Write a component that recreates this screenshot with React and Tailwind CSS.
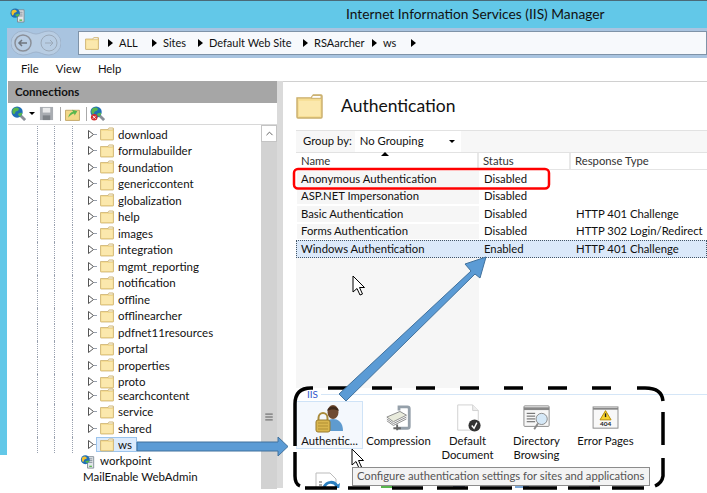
import { ChevronUp, Menu } from 'lucide-react';

const TREE = [
  'download', 'formulabuilder', 'foundation', 'genericcontent', 'globalization', 'help', 'images',
  'integration', 'mgmt_reporting', 'notification', 'offline', 'offlinearcher', 'pdfnet11resources',
  'portal', 'properties', 'proto', 'searchcontent', 'service', 'shared', 'ws',
];

const ROWS = [
  { name: 'Anonymous Authentication', status: 'Disabled', type: '' },
  { name: 'ASP.NET Impersonation', status: 'Disabled', type: '' },
  { name: 'Basic Authentication', status: 'Disabled', type: 'HTTP 401 Challenge' },
  { name: 'Forms Authentication', status: 'Disabled', type: 'HTTP 302 Login/Redirect' },
  { name: 'Windows Authentication', status: 'Enabled', type: 'HTTP 401 Challenge', selected: true },
];

function Folder({ className = 'w-[14px] h-[14px]' }) {
  return (
    <svg viewBox="0 0 28 26" className={`shrink-0 ${className}`}>
      <path d="M1 4h15l2-3h8a1 1 0 0 1 1 1v22a1 1 0 0 1-1 1H2a1 1 0 0 1-1-1z" fill="#f6dd92" stroke="#c9ae6c" strokeWidth="1.5" />
      <path d="M17 1.500h9v3H16z" fill="#fff" stroke="#c9ae6c" strokeWidth="1" />
      <path d="M3 7h22v16H3z" fill="#fbe8ad" />
    </svg>
  );
}

function Globe({ className = 'w-[15px] h-[15px]', bad }) {
  return (
    <svg viewBox="0 0 16 16" className={`shrink-0 ${className}`}>
      <path d="M9 9l6 6" stroke="#8a8f98" strokeWidth="3" />
      <circle cx="6.500" cy="6.500" r="6" fill="#1f6fb5" />
      <path d="M3 2.500c2-1.500 4-1 5 0s0 3-2 3-1 3-3 3-2-4.500 0-6zM8 8c2-1 4-1 4 0s-2 4-3 3-2-2-1-3z" fill="#58b74e" />
      {bad && <circle cx="4.500" cy="12" r="3.500" fill="#d32f2f" />}
      {bad && <path d="M3 10.500l3 3m0-3l-3 3" stroke="#fff" strokeWidth="1" />}
    </svg>
  );
}

function ServerGlobe({ className = 'w-[15px] h-[16px]' }) {
  return (
    <svg viewBox="0 0 16 17" className={`shrink-0 ${className}`}>
      <path d="M8 3h7v13H8z" fill="#e3e6e9" stroke="#7d8a94" />
      <path d="M9.500 5.500h4M9.500 7.500h4M9.500 9.500h4" stroke="#7d8a94" />
      <path d="M10 14h3" stroke="#58b74e" strokeWidth="1.500" />
      <circle cx="5.500" cy="6.500" r="5" fill="#1f6fb5" />
      <path d="M2 4c2-2 4-1 5 0s-1 2-2 2-1 3-2 3-2-3-1-5z" fill="#f2c230" />
      <path d="M6 8c2-1 4-1 4 0s-2 3-3 2-2-1-1-2z" fill="#58b74e" />
    </svg>
  );
}

function Crumb({ label, width }) {
  return (
    <div className={`flex items-center shrink-0 ${width}`}>
      <span className="shrink-0 w-0 h-0 border-y-[4px] border-y-transparent border-l-[5px] border-l-black" />
      {label && <span className="ml-[6px]">{label}</span>}
    </div>
  );
}

function TreeRow({ label, selected }) {
  return (
    <div className={`flex items-center h-[16.5px] ${label === 'proto' ? 'mb-[-3px]' : ''}`}>
      <span className="w-[37px] shrink-0" />
      <span className="w-[17px] h-full shrink-0 border-l border-dotted border-gray-400" />
      <span className="w-[18px] h-full shrink-0 border-l border-dotted border-gray-400" />
      <span className="w-[16px] h-full shrink-0 border-l border-dotted border-gray-400" />
      <svg viewBox="0 0 6 9" className="w-[6px] h-[9px] shrink-0">
        <path d="M.5.500l5 4-5 4z" fill="#fff" stroke="#555" />
      </svg>
      <span className="w-[2px] shrink-0 border-t border-dotted border-gray-400" />
      <div className={`flex items-center gap-[4px] h-[15px] pl-[3px] pr-[4px] border ${selected ? 'bg-[#dcebfc] border-[#9cc4ec]' : 'border-transparent'}`}>
        <Folder />
        <span className="text-[11.5px] text-[#111]">{label}</span>
      </div>
    </div>
  );
}

function ConnectionsPane() {
  return (
    <div className="w-[277px] flex flex-col shrink-0 -ml-[7px]">
      <div className="h-[22px] bg-[#a6a6a6] flex items-center pl-[7px] ml-[8px] text-[11.5px] font-bold text-[#111]">Connections</div>
      <div className="h-[22px] flex items-center pl-[3px] ml-[8px] gap-[3px] bg-white border-b border-[#d8d8d8]">
        <Globe />
        <span className="w-0 h-0 border-x-[3px] border-x-transparent border-t-[3px] border-t-black" />
        <svg viewBox="0 0 16 16" className="w-[15px] h-[15px] ml-[1px]">
          <path d="M1 1h14v14H1z" fill="#a9adb2" />
          <path d="M4 2h8v5H4z" fill="#e9eaeb" />
          <path d="M4 10h8v5H4z" fill="#7e8388" />
        </svg>
        <span className="w-px h-[14px] bg-[#aaa] ml-[3px]" />
        <svg viewBox="0 0 28 26" className="w-[15px] h-[14px] ml-[1px]">
          <path d="M1 6h26v19H1z" fill="#f3d98a" stroke="#b89a55" strokeWidth="1.500" />
          <path d="M6 20c1-7 5-10 9-11l-2-4 10 3-5 8-1-4c-4 1-8 4-11 8z" fill="#58b74e" />
        </svg>
        <span className="w-px h-[14px] bg-[#aaa] ml-[3px]" />
        <Globe bad />
      </div>
      <div className="flex h-[364px]">
        <div className="flex-1 min-w-0 pt-[1px]">
          {TREE.map((label) => (
            <TreeRow key={label} label={label} selected={label === 'ws'} />
          ))}
          <div className="flex items-center h-[16px] pl-[80px] gap-[5px]">
            <ServerGlobe className="w-[15px] h-[15px]" />
            <span className="text-[11.5px] text-[#111]">workpoint</span>
          </div>
          <div className="h-[16px] pl-[83px] text-[11.5px] text-[#111] leading-[16px]">MailEnable WebAdmin</div>
        </div>
        <div className="w-[16px] bg-[#d2d2d2] flex flex-col items-center shrink-0">
          <div className="h-[17px] w-full bg-white border border-[#c4c4c4] flex items-center justify-center">
            <ChevronUp className="w-[11px] h-[11px] text-[#555]" />
          </div>
          <div className="flex-1 flex items-start justify-center pt-[270px]">
            <Menu className="w-[10px] h-[10px] text-[#444]" />
          </div>
        </div>
      </div>
    </div>
  );
}

function FeatureTile({ label, children, active }) {
  return (
    <div className={`w-[67px] h-[48px] flex flex-col items-center border shrink-0 ${active ? 'bg-[#f4f8fd] border-[#cfe3f7]' : 'border-transparent'}`}>
      <div className="h-[32px] shrink-0 flex items-center justify-center">{children}</div>
      <span className="shrink-0 text-[11.3px] leading-[14px] text-center text-[#111] whitespace-pre-line">{label}</span>
    </div>
  );
}

function AuthPane() {
  return (
    <div className="flex-1 min-w-0 h-[407px] flex">
      <div className="w-[6px] shrink-0 bg-[#dadada]" />
      <div className="flex-1 min-w-0 border-t border-[#d0d0d0] flex flex-col pl-[13px] overflow-hidden">
        <div className="h-[48px] shrink-0 flex items-center">
          <Folder className="w-[27px] h-[25px]" />
          <span className="text-[17.5px] ml-[18px] text-[#111]">Authentication</span>
        </div>
        <div className="h-[23px] shrink-0 flex items-center bg-[#f7f7f7] border-y border-[#e2e2e2] pl-[7px] text-[11.3px]">
          <span className="text-[#111]">Group by:</span>
          <div className="ml-[3px] w-[106px] h-full bg-white flex items-center justify-between px-[5px]">
            <span className="text-[#111]">No Grouping</span>
            <span className="w-0 h-0 mr-[1px] border-x-[3px] border-x-transparent border-t-[3px] border-t-black" />
          </div>
        </div>
        <div className="flex shrink-0 h-[17px] border-b border-[#e4e4e4] text-[11.3px] text-[#333]">
          <div className="relative w-[183px] shrink-0 pl-[5px] border-r-2 border-[#e8e8e8]">
            Name
            <span className="absolute left-[85px] top-[-1px] w-0 h-0 border-x-[4px] border-x-transparent border-b-[4px] border-b-black" />
          </div>
          <div className="w-[92px] shrink-0 pl-[4px] border-r-2 border-[#e8e8e8]">Status</div>
          <div className="pl-[4px]">Response Type</div>
        </div>
        <div className="flex flex-col shrink-0 h-[218px]">
          {ROWS.map((row) => (
            <div
              key={row.name}
              className={`flex items-center h-[17.5px] shrink-0 text-[11.3px] text-[#111] border ${row.selected ? 'bg-[#dbe9fa] border-dotted border-[#456]' : 'border-transparent'}`}
            >
              <div className={`w-[182px] shrink-0 pl-[4px] pt-[1px] h-full flex items-center ${row.selected ? '' : 'bg-[#f6f6f6]'}`}>{row.name}</div>
              <div className="w-[92px] shrink-0 pl-[5px] pt-[1px]">{row.status}</div>
              <div className="pl-[5px] pt-[1px] whitespace-nowrap">{row.type}</div>
            </div>
          ))}
          <div className="w-[183px] flex-1 bg-[#f6f6f6]" />
        </div>
        <div className="flex shrink-0 items-center h-[12px] text-[10px] text-[#3355cc] pl-[11px] gap-[3px]">
          <span className="leading-none">IIS</span>
          <span className="flex-1 border-t border-[#d5e6f7]" />
        </div>
        <div className="flex shrink-0 gap-[2px] mt-[1px]">
          <FeatureTile label="Authentic..." active>
            <svg viewBox="0 0 30 30" className="w-[30px] h-[30px]">
              <path d="M10 28c0-9 3-12 8-12s10 3 10 12z" fill="#5f9bcf" />
              <ellipse cx="18" cy="9" rx="5.500" ry="7" fill="#6f4a30" />
              <path d="M12 8c1-6 11-6 12 0-3-2-9-2-12 0z" fill="#3f2a1c" />
              <path d="M3.500 18v-3a4.500 5 0 0 1 9 0v3" fill="none" stroke="#a98b3c" strokeWidth="2" />
              <rect x="1" y="17" width="14" height="12" rx="2" fill="#d9b64e" stroke="#9a7d2e" />
              <path d="M3 20h10M3 23h10M3 26h10" stroke="#b08f35" />
            </svg>
          </FeatureTile>
          <FeatureTile label="Compression">
            <svg viewBox="0 0 30 30" className="w-[28px] h-[28px]">
              <path d="M2 14l14-6 7 4-14 7z" fill="#e9ebdc" stroke="#888" />
              <path d="M2 16l7 5 14-7M2 18l7 5 14-7" fill="none" stroke="#888" />
              <path d="M15 7V3h9a2 2 0 0 1 2 2v19a2 2 0 0 1-2 2H13" fill="none" stroke="#95a0aa" strokeWidth="3" />
              <path d="M9 26h8M13 22v6" stroke="#666" strokeWidth="2" />
            </svg>
          </FeatureTile>
          <FeatureTile label={'Default\nDocument'}>
            <svg viewBox="0 0 30 30" className="w-[28px] h-[28px]">
              <path d="M4 1h16l6 6v21H4z" fill="#fff" stroke="#cfcfcf" />
              <path d="M20 1v6h6" fill="#eee" stroke="#cfcfcf" />
              <circle cx="22" cy="23" r="6.500" fill="#333" />
              <path d="M19 23l2.500 3 3-6" fill="none" stroke="#fff" strokeWidth="1.500" />
            </svg>
          </FeatureTile>
          <FeatureTile label={'Directory\nBrowsing'}>
            <svg viewBox="0 0 30 30" className="w-[28px] h-[28px]">
              <rect x="1" y="2" width="27" height="22" rx="1" fill="#f7f7f7" stroke="#888" />
              <path d="M1 5h27" stroke="#888" strokeWidth="3" />
              <path d="M4 10h9M4 13h9M4 16h9M4 19h9" stroke="#555" />
              <circle cx="20" cy="16" r="6" fill="#d5e8f7" stroke="#888" />
              <path d="M16 21l-4 6" stroke="#888" strokeWidth="2" />
            </svg>
          </FeatureTile>
          <FeatureTile label="Error Pages">
            <svg viewBox="0 0 30 26" className="w-[28px] h-[24px]">
              <rect x="1" y="1" width="27" height="23" fill="#f8f8f8" stroke="#888" />
              <path d="M1 3h27" stroke="#888" strokeWidth="2" />
              <path d="M14.500 5l6 10h-12z" fill="#f6d32d" stroke="#b58900" />
              <path d="M14.500 8v4" stroke="#222" strokeWidth="1.500" />
              <text x="14.500" y="22" textAnchor="middle" fontSize="7" fontWeight="700" fill="#222">404</text>
            </svg>
          </FeatureTile>
        </div>
        <div className="flex shrink-0 mt-[23px] pl-[17px]">
          <svg viewBox="0 0 28 28" className="w-[28px] h-[28px]">
            <path d="M3 1h14l6 6v21H3z" fill="#fff" stroke="#bbb" />
            <path d="M6 10h3M6 13h3M6 16h3" stroke="#555" />
            <path d="M11 15c3-6 10-6 13-1" fill="none" stroke="#2a7fc0" strokeWidth="3" />
            <path d="M27 11l-1 7-6-2z" fill="#2a7fc0" />
          </svg>
          <span className="ml-[40px] w-[12px] h-[28px] bg-[#58b74e]" />
          <span className="ml-[60px] w-[12px] h-[28px] bg-[#7d8fa8]" />
          <span className="ml-[50px] w-[14px] h-[28px] bg-[#7aa7d8]" />
          <span className="ml-[60px] w-[10px] h-[28px] bg-[#e0b6d8]" />
        </div>
      </div>
    </div>
  );
}

export default function App() {
  return (
    <div className="relative w-[707px] h-[493px] overflow-hidden bg-white font-['Lato',sans-serif]">
      <div className="h-[28px] bg-[#62c8e8] border-t border-[#4a6a78] flex items-center pl-[10px]">
        <ServerGlobe />
        <span className="ml-[321px] text-[13.75px] text-[#111]">Internet Information Services (IIS) Manager</span>
      </div>
      <div className="flex">
        <div className="w-[7px] h-[427px] bg-[#62c8e8] shrink-0" />
        <div className="flex-1 min-w-0">
          <div className="h-[30px] bg-[#a9c4e0] flex items-center pl-[4px]">
            <svg viewBox="0 0 50 26" className="w-[50px] h-[26px] shrink-0">
              <path d="M12 1c6 0 9 3 13 3s7-3 13-3a12 12 0 0 1 0 24c-6 0-9-3-13-3s-7 3-13 3a12 12 0 0 1 0-24z" fill="#b8cde3" stroke="#9fb4cc" />
              <circle cx="12" cy="13" r="8" fill="none" stroke="#8b9099" strokeWidth="1.500" />
              <path d="M16 13H8m3-3l-3 3 3 3" fill="none" stroke="#6f757e" strokeWidth="1.500" />
              <circle cx="38" cy="13" r="8" fill="none" stroke="#9ba9b8" />
              <path d="M34 13h8m-3-3l3 3-3 3" fill="none" stroke="#9ba9b8" />
            </svg>
            <div className="ml-[17px] flex-1 h-[24px] bg-[#f7f9fc] border border-[#7f93a8] flex items-center pl-[6px] text-[11px] text-[#111]">
              <Folder className="w-[14px] h-[13px] mr-[9px]" />
              <Crumb label="ALL" width="w-[44px]" />
              <Crumb label="Sites" width="w-[46px]" />
              <Crumb label="Default Web Site" width="w-[105px]" />
              <Crumb label="RSAarcher" width="w-[69px]" />
              <Crumb label="ws" width="w-[39px]" />
              <Crumb />
            </div>
          </div>
          <div className="h-[23px] bg-white flex items-center pl-[14px] gap-[17px] text-[11.3px] text-[#111]">
            <span>File</span>
            <span>View</span>
            <span>Help</span>
          </div>
          <div className="flex">
            <ConnectionsPane />
            <AuthPane />
          </div>
        </div>
      </div>

      {/* annotations drawn over the screenshot */}
      <svg viewBox="0 0 707 493" className="absolute inset-0 w-[707px] h-[493px] pointer-events-none">
        <rect x="294" y="169" width="255" height="19.500" rx="4" fill="none" stroke="#ff0000" strokeWidth="2.500" />
        <path
          d="M313 388H311Q295 388 295 404V446M295 452V476Q295 484 300 486M328 388H348M372 388H392M416 388H435M460 388H479M504 388H523M548 388H567M592 388H611M637 388H645Q662 388 663 401M663 412V445M663 458V476Q662 483 655 486M305 488H337M348 488H370M392 488H423M437 488H468M480 488H512M523 488H557M568 488H600M612 488H644"
          fill="none"
          stroke="#000"
          strokeWidth="3.500"
        />
        <path d="M137 442h141v-5l10 9.500-10 9.500v-5h-141z" fill="#5b9bd5" stroke="#41719c" />
        <path d="M339 394L471 271l-6-7 21-7-6 21-5-4L346 401z" fill="#5b9bd5" stroke="#41719c" />
        <path d="M353 276v16l4-3.500 3 6.500 2.500-1-3-6.500h5z" fill="#fff" stroke="#000" />
        <path d="M352 449v16l4-3.500 3 6.500 2.500-1-3-6.500h5z" fill="#fff" stroke="#000" />
      </svg>

      <div className="absolute left-[352px] top-[467px] w-[298px] h-[19px] bg-[#f3f3f3] border border-[#8c8c8c] flex items-center pl-[4px] text-[11.2px] text-[#555] whitespace-nowrap">
        Configure authentication settings for sites and applications
      </div>
    </div>
  );
}
